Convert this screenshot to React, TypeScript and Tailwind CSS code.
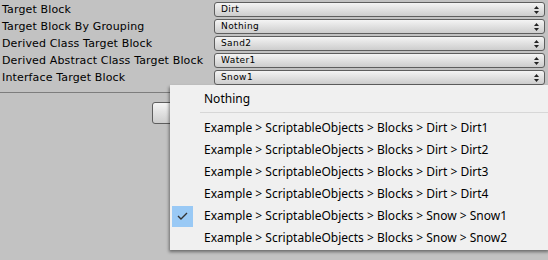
import React from "react";

const rows = [
  ["Target Block", "Dirt"],
  ["Target Block By Grouping", "Nothing"],
  ["Derived Class Target Block", "Sand2"],
  ["Derived Abstract Class Target Block", "Water1"],
  ["Interface Target Block", "Snow1"],
];

const items = [
  "Example > ScriptableObjects > Blocks > Dirt > Dirt1",
  "Example > ScriptableObjects > Blocks > Dirt > Dirt2",
  "Example > ScriptableObjects > Blocks > Dirt > Dirt3",
  "Example > ScriptableObjects > Blocks > Dirt > Dirt4",
  "Example > ScriptableObjects > Blocks > Snow > Snow1",
  "Example > ScriptableObjects > Blocks > Snow > Snow2",
];

function Arrows() {
  return (
    <svg width="5" height="8" viewBox="0 0 5 8" className="shrink-0">
      <path d="M2.5 0 L5 3 L0 3 Z" fill="#222" />
      <path d="M2.5 8 L5 5 L0 5 Z" fill="#222" />
    </svg>
  );
}

export default function App() {
  return (
    <div className="relative w-[548px] h-[260px] bg-[#c2c2c2] overflow-hidden" style={{ fontFamily: "'DejaVu Sans', sans-serif" }}>
      <div className="flex flex-col gap-[2px] pt-[2px]">
        {rows.map(([label, value]) => (
          <div key={label} className="flex items-center h-[15px]">
            <div className="w-[214px] pl-[2px] text-[11px] leading-[15px] tracking-[0.15px] text-black whitespace-nowrap">{label}</div>
            <div className="flex items-center w-[331px] h-[15px] rounded-[3px] border border-[#5e5e5e] bg-gradient-to-b from-[#f4f4f4] to-[#cdcdcd] pl-[6px] pr-[5px]">
              <span className="flex-1 text-[9px] leading-[13px] text-black tracking-[0.4px]">{value}</span>
              <Arrows />
            </div>
          </div>
        ))}
      </div>
      <div className="mt-[7px] h-px bg-[#7d7d7d]" />
      <div className="ml-[152px] mt-[9px] w-[60px] h-[22px] rounded-[3px] border border-[#5e5e5e] bg-gradient-to-b from-[#f4f4f4] to-[#cdcdcd]" />

      <div className="absolute left-[170px] top-[85px] w-[380px] h-[165px] bg-[#f0f0f0] shadow-[-1px_2px_3px_rgba(0,0,0,0.45)]" style={{ fontFamily: "'Noto Sans', 'Open Sans', sans-serif" }}>
        <div className="flex items-center h-[27px] pl-[34px] text-[12px] text-black">Nothing</div>
        <div className="ml-[30px] mr-[2px] h-px bg-[#d7d7d7]" />
        <div className="flex flex-col pt-[4px]">
          {items.map((it, i) => (
            <div key={it} className="flex items-center h-[22px]">
              <div className={"w-[21px] h-[21px] ml-[2px] flex items-center justify-center " + (i === 4 ? "bg-[#99c9f5]" : "")}>
                {i === 4 && (
                  <svg width="11" height="8" viewBox="0 0 11 8">
                    <path d="M1 4 L4 7 L10 1" stroke="#333" strokeWidth="1.4" fill="none" />
                  </svg>
                )}
              </div>
              <span className="ml-[11px] text-[12px] text-black whitespace-nowrap">{it}</span>
            </div>
          ))}
        </div>
      </div>
    </div>
  );
}
